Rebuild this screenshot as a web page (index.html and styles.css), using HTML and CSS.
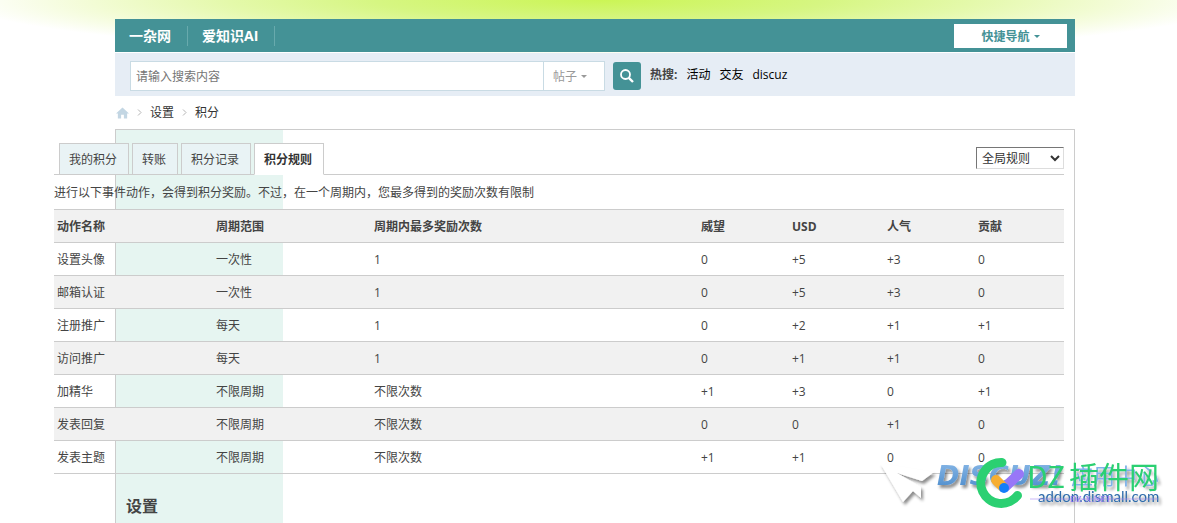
FILE: index.html
```html
<!DOCTYPE html>
<html lang="zh-CN">
<head>
<meta charset="utf-8">
<title>积分规则</title>
<link rel="stylesheet" href="styles.css">
</head>
<body>
<div class="page">
  <header class="nav">
    <nav class="nav-links">
      <a href="#">一杂网</a>
      <a href="#">爱知识AI</a>
    </nav>
    <button class="quick" type="button">快捷导航<span class="caret"></span></button>
  </header>

  <form class="search">
    <div class="search-box">
      <input class="search-input" type="text" placeholder="请输入搜索内容" aria-label="搜索内容">
      <button class="search-type" type="button">帖子<span class="caret"></span></button>
    </div>
    <button class="search-go" type="submit" aria-label="搜索">
      <svg width="16" height="16" viewBox="0 0 16 16" fill="none" stroke="#fff"><circle cx="6.500" cy="6.500" r="4.5" stroke-width="1.8"/><path d="M9.800 9.800L14 14" stroke-width="2.4"/></svg>
    </button>
    <div class="hot"><strong>热搜:</strong><a href="#">活动</a><a href="#">交友</a><a href="#">discuz</a></div>
  </form>

  <nav class="crumbs">
    <a class="home" href="#" aria-label="首页"><svg width="13" height="12" viewBox="0 0 14 12" fill="#c3d6e3"><path d="M7 0L14 6.5H12V12H8.500V8H5.500V12H2V6.500H0Z"/></svg></a>
    <svg class="sep" width="5" height="7" viewBox="0 0 5 7" fill="none" stroke="#b4b4b4"><path d="M1 .5L4 3.500L1 6.500"/></svg>
    <a href="#">设置</a>
    <svg class="sep" width="5" height="7" viewBox="0 0 5 7" fill="none" stroke="#b4b4b4"><path d="M1 .5L4 3.500L1 6.500"/></svg>
    <a href="#">积分</a>
  </nav>

  <div class="frame">
    <div class="side-bg"></div>
    <main class="main">
      <div class="tabs">
        <a href="#">我的积分</a>
        <a href="#">转账</a>
        <a href="#">积分记录</a>
        <a class="active" href="#">积分规则</a>
        <select class="rule" aria-label="规则范围"><option>全局规则</option></select>
      </div>
      <p class="note">进行以下事件动作，会得到积分奖励。不过，在一个周期内，您最多得到的奖励次数有限制</p>
      <table class="rules">
        <colgroup><col class="c-name"><col class="c-cycle"><col><col class="c-num"><col class="c-usd"><col class="c-num"><col class="c-last"></colgroup>
        <thead><tr><th>动作名称</th><th>周期范围</th><th>周期内最多奖励次数</th><th>威望</th><th>USD</th><th>人气</th><th>贡献</th></tr></thead>
        <tbody>
          <tr><td>设置头像</td><td>一次性</td><td>1</td><td>0</td><td>+5</td><td>+3</td><td>0</td></tr>
          <tr><td>邮箱认证</td><td>一次性</td><td>1</td><td>0</td><td>+5</td><td>+3</td><td>0</td></tr>
          <tr><td>注册推广</td><td>每天</td><td>1</td><td>0</td><td>+2</td><td>+1</td><td>+1</td></tr>
          <tr><td>访问推广</td><td>每天</td><td>1</td><td>0</td><td>+1</td><td>+1</td><td>0</td></tr>
          <tr><td>加精华</td><td>不限周期</td><td>不限次数</td><td>+1</td><td>+3</td><td>0</td><td>+1</td></tr>
          <tr><td>发表回复</td><td>不限周期</td><td>不限次数</td><td>0</td><td>0</td><td>+1</td><td>0</td></tr>
          <tr><td>发表主题</td><td>不限周期</td><td>不限次数</td><td>+1</td><td>+1</td><td>0</td><td>0</td></tr>
        </tbody>
      </table>
    </main>
    <h2 class="side-title">设置</h2>
  </div>
</div>

<svg class="mark" width="301" height="71" viewBox="870 452 301 71" role="img" aria-label="DZ插件网 addon.dismall.com">
  <defs>
    <filter id="shade" x="-20%" y="-20%" width="140%" height="160%"><feDropShadow dx="2" dy="3" stdDeviation="1.5" flood-color="#000" flood-opacity=".45"/></filter>
    <linearGradient id="blue" x1="0" y1="0" x2="0" y2="1"><stop offset="0" stop-color="#8ab9e8"/><stop offset="1" stop-color="#4a8aca"/></linearGradient>
  </defs>
  <g filter="url(#shade)">
    <path fill="#fff" d="M880 463L934 472L922 481L897 473L921 487V498L913 491L903 502Z"/>
    <text class="mark-brand" x="937" y="485" fill="url(#blue)">DISCUZ!</text>
    <text class="mark-app" x="1071" y="484" fill="#7fb2e8">应用中心</text>
    <text class="mark-url" x="1038" y="502" fill="#2f6cab">addon.dismall.com</text>
  </g>
  <path d="M1030 499H1158" stroke="#a98bf5" stroke-width="1" opacity=".6"/>
  <text class="mark-net" x="1070" y="502" fill="#9a78f5">DZ-X.NET</text>
  <path d="M1002 462.500A20.500 20.500 0 1 0 1017.500 495.500" fill="none" stroke="#2bd072" stroke-width="9" stroke-linecap="round"/>
  <path d="M1005 487L1019 474" stroke="#9877f8" stroke-width="10" stroke-linecap="round"/>
  <path d="M996 480L1003 487" stroke="#f7ae32" stroke-width="10" stroke-linecap="round"/>
  <circle cx="1004" cy="488" r="5" fill="#147dfa"/>
  <text class="mark-name" x="1027" y="488" fill="#2bd072">DZ<tspan x="1069">插件网</tspan></text>
</svg>
</body>
</html>
```

FILE: styles.css
```css
* { box-sizing: border-box; }

body {
  margin: 0;
  color: #444;
  background: #fff radial-gradient(ellipse 640px 56px at 51% 0, #cbf555 0%, #d6f682 35%, #e4f9aa 58%, #f3fcd6 80%, #fff 100%) no-repeat;
  font: 12px/18px "Open Sans", "Noto Sans CJK SC", sans-serif;
}

a { color: inherit; text-decoration: none; }
button, input, select { font: inherit; }

.page {
  display: flex;
  flex-direction: column;
  height: 100vh;
  overflow: hidden;
  padding: 19px 102px 0 115px;
}

.caret {
  display: inline-block;
  margin-left: 4px;
  border: 3px solid transparent;
  border-top-color: currentColor;
  border-bottom: 0;
  vertical-align: 3px;
}

.nav {
  display: flex;
  flex: none;
  justify-content: space-between;
  align-items: center;
  height: 33px;
  padding-right: 8px;
  background: #449296;
}

.nav-links { display: flex; }
.nav-links a {
  padding: 0 15px 0 14px;
  border-right: 1px solid #68aaad;
  color: #fff;
  font-size: 14px;
  font-weight: 700;
  line-height: 20px;
}
.nav-links a + a { padding-right: 16px; }
.nav-links a:first-child { padding-right: 16px; }

.quick {
  width: 113px;
  height: 24px;
  padding: 2px 0 0;
  border: 0;
  background: #fff;
  color: #449296;
  font-weight: 700;
}

.search {
  display: flex;
  flex: none;
  align-items: center;
  height: 43px;
  margin-top: 1px;
  padding: 3px 15px 0;
  background: #e6edf5;
}

.search-box {
  display: flex;
  width: 475px;
  height: 30px;
  border: 1px solid #c9dbe4;
  background: #fff;
}

.search-input {
  flex: 1;
  min-width: 0;
  padding: 2px 5px 0;
  border: 0;
  outline: 0;
  background: none;
}
.search-input::placeholder { color: #757575; }

.search-type {
  width: 61px;
  padding: 2px 8px 0 0;
  border: 0;
  border-left: 1px solid #c9dbe4;
  background: none;
  color: #999;
}

.search-go {
  display: grid;
  place-items: center;
  width: 28px;
  height: 28px;
  margin-left: 8px;
  padding: 0;
  border: 0;
  border-radius: 3px;
  background: #449296;
}

.hot { display: flex; gap: 9px; margin-left: 9px; padding-bottom: 3px; color: #000; }
.hot strong { color: #444; }

.crumbs {
  display: flex;
  flex: none;
  align-items: center;
  gap: 8px;
  height: 33px;
  padding-left: 1px;
  color: #333;
}
.home { display: flex; }

.frame {
  display: grid;
  flex: 1;
  grid-template: auto 1fr / 167px minmax(0, 1fr);
  border: 1px solid #ccc;
  border-bottom: 0;
}
.side-bg { grid-area: 1 / 1 / 3 / 2; background: #e6f5f1; }
.side-title {
  grid-area: 2 / 1;
  margin: 20px 10px;
  font-size: 16px;
  line-height: 24px;
}

.main {
  grid-area: 1 / 1 / 2 / 3;
  margin: 13px 10px 0 -62px;
}

.tabs {
  display: flex;
  gap: 3px;
  height: 32px;
  padding-left: 5px;
  border-bottom: 1px solid #ccc;
}
.tabs a {
  height: 32px;
  padding: 0 11px 0 9px;
  border: 1px solid #ccc;
  background: #e9f3f5;
  line-height: 32px;
}
.tabs .active {
  border-bottom-color: #fff;
  background: #fff;
  color: #333;
  font-weight: 700;
}

.rule {
  width: 88px;
  height: 22px;
  margin: 4px 0 0 auto;
  padding: 1px 0 0 1px;
  border: 1px solid;
  border-color: #767676 #ddd #ddd #767676;
  border-radius: 0;
  background: #fff;
  color: #333;
}

.note { margin: 0; padding-top: 2px; line-height: 32px; }

.rules { width: 100%; border-collapse: separate; border-spacing: 0; table-layout: fixed; border-top: 1px solid #ccc; }
.rules th,
.rules td {
  height: 33px;
  padding: 2px 3px 0;
  border-bottom: 1px solid #ccc;
  text-align: left;
}
.rules thead tr,
.rules tbody tr:nth-child(even) { background: #f1f1f1; }
.c-name { width: 159px; }
.c-cycle { width: 158px; }
.c-num { width: 91px; }
.c-usd { width: 95px; }
.c-last { width: 89px; }

.mark { position: fixed; right: 6px; bottom: 0; pointer-events: none; }
.mark-brand { font: italic 700 27px "DejaVu Sans", sans-serif; }
.mark-app { font: 22px "Noto Sans CJK SC", sans-serif; }
.mark-name { font: 30px "Noto Sans CJK SC", sans-serif; }
.mark-url { font: 15px Lato, sans-serif; }
.mark-net { font: 9px "Liberation Serif", serif; }
```
